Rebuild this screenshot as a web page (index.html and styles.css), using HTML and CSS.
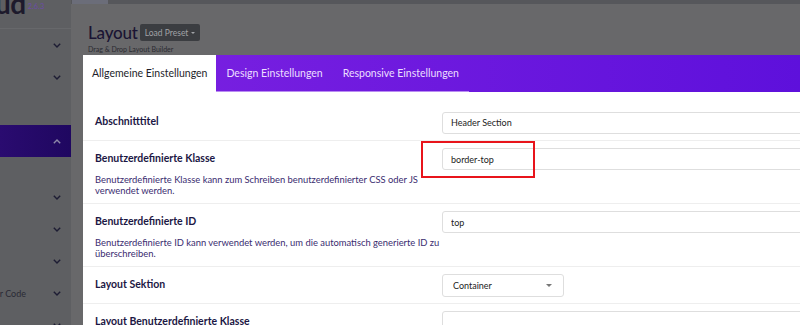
FILE: index.html
```html
<!DOCTYPE html>
<html lang="de">
<head>
    <meta charset="UTF-8">
    <meta name="viewport" content="width=device-width, initial-scale=1.0">
    <title>Layout Builder</title>
    <link rel="stylesheet" href="styles.css">
</head>
<body>
    <aside class="sidebar">
        <div class="brand">
            <span class="brand-name">ud</span>
            <span class="brand-version">2.6.3</span>
        </div>
        <ul class="menu">
            <li class="menu-item"><span class="menu-label"></span><svg class="chev" viewBox="0 0 8 5"><polyline points="0.8,0.8 4,4 7.2,0.8"/></svg></li>
            <li class="menu-item"><span class="menu-label"></span><svg class="chev" viewBox="0 0 8 5"><polyline points="0.8,0.8 4,4 7.2,0.8"/></svg></li>
            <li class="menu-item"><span class="menu-label"></span></li>
            <li class="menu-item active"><span class="menu-label"></span><svg class="chev" viewBox="0 0 8 5"><polyline points="0.8,4.2 4,1 7.2,4.2"/></svg></li>
            <li class="menu-gap"></li>
            <li class="menu-item"><span class="menu-label"></span><svg class="chev" viewBox="0 0 8 5"><polyline points="0.8,0.8 4,4 7.2,0.8"/></svg></li>
            <li class="menu-item"><span class="menu-label"></span><svg class="chev" viewBox="0 0 8 5"><polyline points="0.8,0.8 4,4 7.2,0.8"/></svg></li>
            <li class="menu-item"><span class="menu-label"></span><svg class="chev" viewBox="0 0 8 5"><polyline points="0.8,0.8 4,4 7.2,0.8"/></svg></li>
            <li class="menu-item"><span class="menu-label cut">Footer Code</span><svg class="chev" viewBox="0 0 8 5"><polyline points="0.8,0.8 4,4 7.2,0.8"/></svg></li>
            <li class="menu-item"><span class="menu-label"></span><svg class="chev" viewBox="0 0 8 5"><polyline points="0.8,0.8 4,4 7.2,0.8"/></svg></li>
        </ul>
    </aside>

    <main class="main">
        <div class="topbar"><span class="topbar-tab"></span></div>

        <div class="page-head">
            <div class="title-row">
                <h1>Layout</h1>
                <button class="btn-preset">Load Preset <span class="caret"></span></button>
            </div>
            <p class="subtitle">Drag &amp; Drop Layout Builder</p>
        </div>

        <!-- Einstellungen -->
        <section class="panel">
            <nav class="tabs">
                <a href="#" class="tab active">Allgemeine Einstellungen</a>
                <a href="#" class="tab">Design Einstellungen</a>
                <a href="#" class="tab">Responsive Einstellungen</a>
            </nav>

            <form class="settings">
                <div class="row first">
                    <div class="label-col">
                        <label class="label">Abschnitttitel</label>
                    </div>
                    <div class="field-col">
                        <input class="input" type="text" value="Header Section">
                    </div>
                </div>

                <div class="row">
                    <div class="label-col">
                        <label class="label">Benutzerdefinierte Klasse</label>
                        <p class="help">Benutzerdefinierte Klasse kann zum Schreiben benutzerdefinierter CSS oder JS verwendet werden.</p>
                    </div>
                    <div class="field-col">
                        <input class="input" type="text" value="border-top">
                        <span class="highlight"></span>
                    </div>
                </div>

                <div class="row">
                    <div class="label-col">
                        <label class="label">Benutzerdefinierte ID</label>
                        <p class="help">Benutzerdefinierte ID kann verwendet werden, um die automatisch generierte ID zu überschreiben.</p>
                    </div>
                    <div class="field-col">
                        <input class="input" type="text" value="top">
                    </div>
                </div>

                <div class="row">
                    <div class="label-col">
                        <label class="label">Layout Sektion</label>
                    </div>
                    <div class="field-col">
                        <div class="select">Container <span class="select-caret"></span></div>
                    </div>
                </div>

                <div class="row">
                    <div class="label-col">
                        <label class="label">Layout Benutzerdefinierte Klasse</label>
                    </div>
                    <div class="field-col">
                        <input class="input" type="text" value="">
                    </div>
                </div>
            </form>
        </section>
    </main>
</body>
</html>
```

FILE: styles.css
```css
html, body {
    margin: 0;
    padding: 0;
}

body {
    width: 800px;
    height: 325px;
    overflow: hidden;
    display: flex;
    font-family: "Lato", "Open Sans", sans-serif;
    background-color: #68686a;
}

/* Sidebar */
.sidebar {
    width: 71px;
    flex-shrink: 0;
    background-color: #5e5f62;
    overflow: hidden;
}

.brand {
    height: 28px;
    border-bottom: 1px solid #67686b;
    display: flex;
    align-items: flex-start;
    overflow: hidden;
}

.brand-name {
    font-size: 28px;
    font-weight: 700;
    color: #1d1a2c;
    line-height: 1;
    margin-left: -5px;
    margin-top: -11px;
    letter-spacing: -0.5px;
}

.brand-version {
    font-size: 7.5px;
    color: #6b4ca6;
    margin-left: 2px;
    margin-top: 2px;
}

.menu {
    list-style: none;
    margin: 0;
    padding: 0;
}

.menu-item {
    height: 32px;
    display: flex;
    align-items: center;
    justify-content: space-between;
    padding-right: 10px;
}

.menu-item.active {
    background: linear-gradient(90deg, #2a0b70, #1f0760);
}

.menu-gap {
    height: 24px;
}

.menu-label {
    font-size: 9px;
    color: #2a2a35;
    white-space: nowrap;
}

.menu-label.cut {
    margin-left: -23px;
}

.chev {
    width: 8px;
    height: 5px;
    margin-left: auto;
    fill: none;
    stroke: #1d1c33;
    stroke-width: 1.4;
}

.active .chev {
    stroke: #8d88a8;
}

/* Main */
.main {
    flex: 1;
    min-width: 0;
}

.topbar {
    height: 4px;
    background-color: #56575b;
}

.topbar-tab {
    display: block;
    width: 36px;
    height: 4px;
    margin-left: 1px;
    background-color: #6b6d79;
}

.page-head {
    padding: 20px 0 0 17px;
}

.title-row {
    display: flex;
    align-items: center;
    gap: 2px;
    height: 17px;
}

.title-row h1 {
    margin: 0;
    font-size: 17px;
    font-weight: 500;
    letter-spacing: -0.2px;
    color: #1a1433;
    line-height: 17px;
}

.btn-preset {
    font-family: inherit;
    height: 17px;
    padding: 0 5px;
    border: none;
    border-radius: 2px;
    background-color: #3b3d41;
    color: #a0a2a6;
    font-size: 8.5px;
}

.caret {
    display: inline-block;
    border-left: 2px solid transparent;
    border-right: 2px solid transparent;
    border-top: 2px solid #a0a2a6;
    vertical-align: middle;
}

.subtitle {
    margin: 4px 0 0;
    font-size: 7px;
    line-height: 9px;
    color: #2a2a31;
}

/* Panel */
.panel {
    margin: 1px 0 0 12px;
    width: 760px;
    height: 400px;
    background: #ffffff;
}

.tabs {
    display: flex;
    height: 37px;
    background: linear-gradient(90deg, #7c22e1, #5c0fdb);
}

.tab {
    display: flex;
    align-items: center;
    padding: 0 10px;
    font-size: 10.5px;
    color: #ecdfff;
    text-decoration: none;
    border-bottom: 1px solid #b98cf2;
}

.tab.active {
    background: #ffffff;
    color: #1e1e2a;
    padding: 0 9px;
    border-bottom-color: #ffffff;
}

.settings {
    padding-top: 11px;
}

.row {
    display: grid;
    grid-template-columns: 347px 1fr;
    padding: 7px 0 6px 12px;
    border-bottom: 1px solid #eeeeee;
}

.row + .row {
    padding-top: 6px;
}

.label {
    display: block;
    font-size: 10.5px;
    line-height: 22px;
    font-weight: 700;
    color: #1c1744;
}

.help {
    margin: 5px 0 1px;
    font-size: 9.4px;
    line-height: 11px;
    color: #3a2c70;
}

.field-col {
    position: relative;
}

.input {
    box-sizing: border-box;
    width: 100%;
    height: 22px;
    padding: 0 8px;
    border: 1px solid #dedede;
    border-radius: 3px;
    font-family: inherit;
    font-size: 9px;
    color: #222222;
}

.select {
    box-sizing: border-box;
    display: flex;
    align-items: center;
    justify-content: space-between;
    width: 122px;
    height: 23px;
    margin-top: 1px;
    padding: 0 11px 0 10px;
    border: 1px solid #dedede;
    border-radius: 3px;
    font-size: 9px;
    color: #222222;
}

.select-caret {
    border-left: 3px solid transparent;
    border-right: 3px solid transparent;
    border-top: 3px solid #777777;
}

/* rote Markierung */
.highlight {
    position: absolute;
    left: -21px;
    top: -6px;
    width: 110px;
    height: 33px;
    border: 2px solid #e8141b;
}
```
